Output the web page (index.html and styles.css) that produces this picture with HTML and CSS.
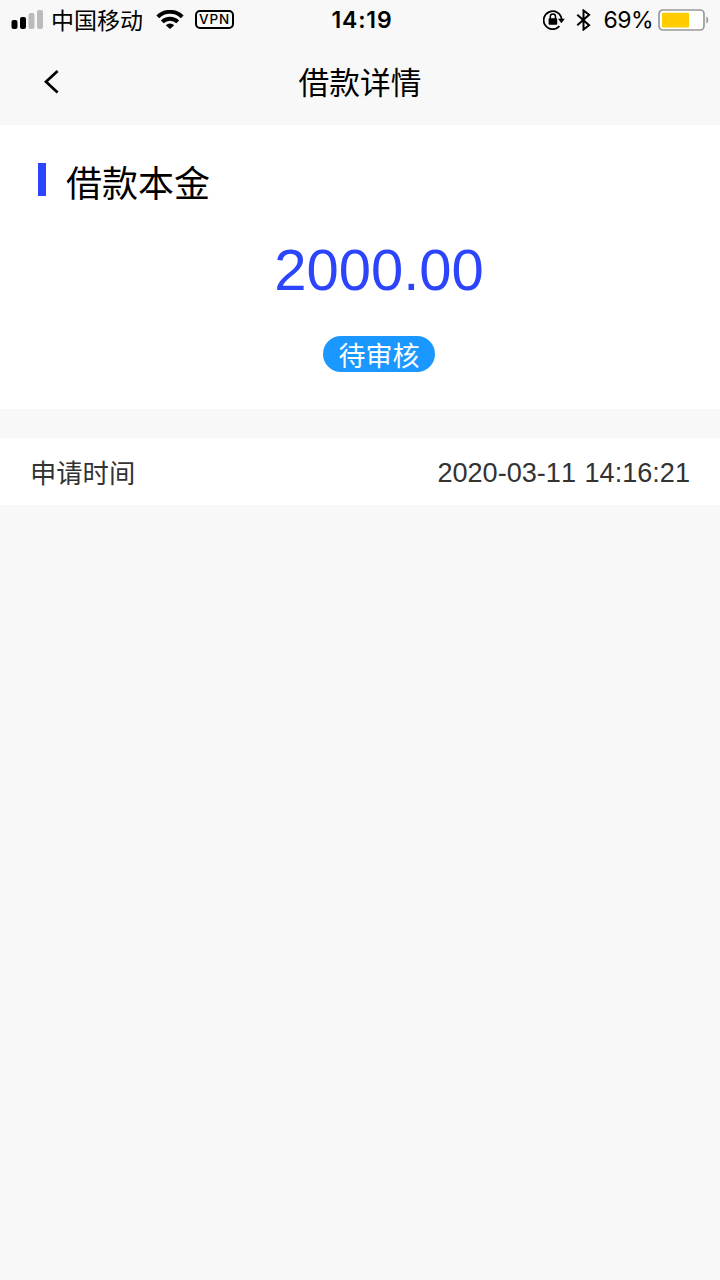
FILE: index.html
```
<!DOCTYPE html>
<html lang="zh-CN">
<head>
  <meta charset="UTF-8">
  <meta name="viewport" content="width=device-width, initial-scale=1.0">
  <link rel="stylesheet" href="styles.css">
  <title>借款详情</title>
</head>

<body>

<div class="status-bar">
  <div class="status-left">
    <svg class="signal" width="32" height="20" viewBox="0 0 32 20">
      <rect x="0.5" y="10" width="6" height="9" rx="2"/>
      <rect x="9" y="7" width="6" height="12" rx="2"/>
      <rect x="17.5" y="3" width="6" height="16" rx="2" fill="#bbb"/>
      <rect x="26" y="0" width="6" height="19" rx="2" fill="#bbb"/>
    </svg>
    <span class="carrier">中国移动</span>
    <svg class="wifi" width="28" height="20" viewBox="0 0 28 20">
      <g fill="none" stroke="#000" stroke-width="4">
        <path d="M1.8 6.9a17.3 17.3 0 0 1 24.4 0"/>
        <path d="M6.3 11.9a10.9 10.9 0 0 1 15.4 0"/>
      </g>
      <path d="M14 19l-4.2-3.8a6 6 0 0 1 8.4 0z"/>
    </svg>
    <span class="vpn">VPN</span>
  </div>
  <span class="clock">14:19</span>
  <div class="status-right">
    <svg class="lock" width="22" height="20" viewBox="0 0 22 20">
      <path d="M16.4 16.2a9 9 0 1 1 2.2-7.2" fill="none" stroke="#000" stroke-width="1.8"/>
      <path d="M15 8.8h6.8l-3.4 4.4z"/>
      <rect x="5.6" y="8.3" width="8.6" height="6.4" rx="0.8"/>
      <path d="M7.3 9V6.6a2.6 2.6 0 0 1 5.2 0V9" fill="none" stroke="#000" stroke-width="1.5"/>
    </svg>
    <svg class="bluetooth" width="15" height="22" viewBox="0 0 15 22">
      <path d="M1.3 5.8l11.8 10.4-5.6 4.3v-19l5.6 4.3L1.3 16.2" fill="none" stroke="#000" stroke-width="2"/>
    </svg>
    <span class="percent">69%</span>
    <svg class="battery" width="51" height="22" viewBox="0 0 51 22">
      <rect x="1" y="1" width="45" height="20" rx="4" fill="#fff" stroke="#999" stroke-width="1.7"/>
      <rect x="4" y="3.8" width="27" height="14.6" rx="1" fill="#fc0"/>
      <path d="M48.3 7.5c2.6 1 2.6 6 0 7z" fill="#999"/>
    </svg>
  </div>
</div>

<div class="nav-bar">
  <svg class="back" width="16" height="24" viewBox="0 0 16 24">
    <path d="M14.6 1L3 11.8l11.6 10.8" fill="none" stroke="#000" stroke-width="2.7"/>
  </svg>
  <h1>借款详情</h1>
</div>

<div class="loan">
  <h2>借款本金</h2>
  <div class="amount">2000.00</div>
  <span class="state">待审核</span>
</div>

<div class="row">
  <span class="label">申请时间</span>
  <span class="value">2020-03-11 14:16:21</span>
</div>

</body>
</html>
```
FILE: styles.css
```
* {
  box-sizing: border-box;
}

body {
  margin: 0;
  min-height: 100vh;
  background-color: #f8f8f8;
  font-family: "Liberation Sans", "Noto Sans CJK SC", sans-serif;
  color: #000;
}

svg {
  display: block;
  flex: none;
}

/* status bar */
.status-bar {
  display: grid;
  grid-template-columns: 1fr auto 1fr;
  align-items: center;
  height: 40px;
  padding: 0 11px;
  line-height: 40px;
}

.status-left, .status-right {
  display: flex;
  align-items: center;
  height: 40px;
}

.status-right {
  justify-content: flex-end;
}

.carrier {
  margin-left: 8px;
  padding-top: 1px;
  font-size: 23px;
}

.wifi {
  margin-left: 13px;
}

.vpn {
  width: 39px;
  height: 19px;
  margin: 0 0 1px 11px;
  border: 2px solid #000;
  border-radius: 5px;
  font-family: Inter, sans-serif;
  font-size: 13.5px;
  font-weight: 500;
  line-height: 15px;
  letter-spacing: 0.9px;
  text-align: center;
}

.clock {
  padding-left: 4px;
  font-family: Inter, sans-serif;
  font-size: 23px;
  font-weight: 600;
  letter-spacing: 0.8px;
}

.lock {
  margin-right: 1px;
}

.bluetooth {
  margin-left: 10px;
}

.percent {
  margin-left: 12px;
  font-family: Inter, sans-serif;
  font-size: 23px;
  letter-spacing: -0.5px;
}

.battery {
  margin-left: 5px;
}

/* title bar */
.nav-bar {
  display: grid;
  grid-template-columns: 1fr auto 1fr;
  align-items: center;
  height: 85px;
  padding: 0 43px;
}

.back {
  margin-bottom: 1px;
}

h1 {
  margin: 0;
  padding-top: 2px;
  font-size: 30.7px;
  font-weight: 400;
  line-height: 83px;
}

/* loan amount */
.loan {
  display: flex;
  flex-direction: column;
  align-items: center;
  height: 284px;
  padding: 38px 0 0 38px;
  background-color: #fff;
}

h2 {
  align-self: flex-start;
  height: 33px;
  margin: 0;
  padding-left: 20px;
  border-left: 8px solid #2c44fb;
  font-size: 36px;
  font-weight: 400;
  line-height: 43px;
}

.amount {
  margin-top: 42px;
  color: #2c44fb;
  font-size: 58px;
  line-height: 64px;
}

.state {
  width: 112px;
  height: 36px;
  margin-top: 34px;
  border-radius: 18px;
  background-color: #1b98ff;
  color: #fff;
  font-size: 27px;
  line-height: 42px;
  text-align: center;
}

/* detail row */
.row {
  display: flex;
  justify-content: space-between;
  height: 67px;
  margin-top: 29px;
  padding: 0 30px;
  background-color: #fff;
  color: #333;
}

.label {
  font-size: 26.3px;
  line-height: 72px;
}

.value {
  font-size: 27.1px;
  font-kerning: none;
  line-height: 69px;
  word-spacing: 1px;
}
```
